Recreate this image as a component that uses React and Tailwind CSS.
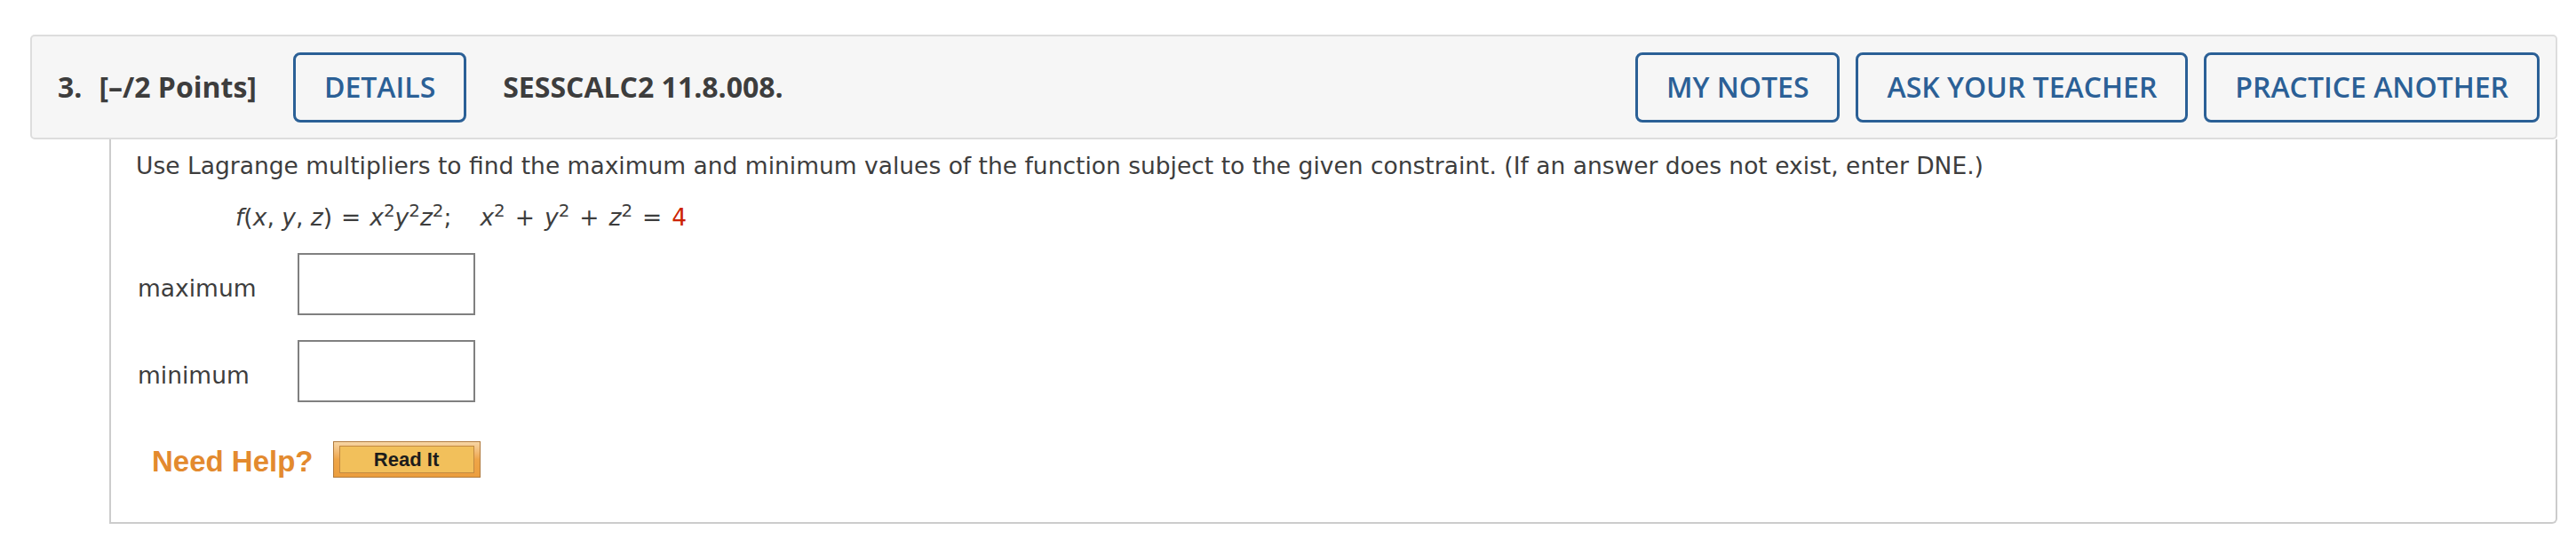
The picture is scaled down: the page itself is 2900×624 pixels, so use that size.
export default function App() {
  const openSans = { fontFamily: '"Open Sans", "Liberation Sans", sans-serif' }
  return (
    <div className="w-[2900px] h-[624px] bg-white pt-[39px] pl-[34px] pr-[21px]">
      {/* Question header */}
      <div
        className="flex items-center h-[118px] border-2 border-[#dddddd] rounded-[5px] bg-[#f6f6f6] pl-[29px] pr-[18px] text-[32px] text-[#3d3d3d]"
        style={openSans}
      >
        <span className="font-bold">3.</span>
        <span className="font-bold ml-[19px]">[–/2 Points]</span>
        <button className="ml-[41px] h-[79px] px-[32px] border-[3px] border-[#2b6096] rounded-[8px] font-semibold text-[#2b6096] bg-[#f6f6f6]">
          DETAILS
        </button>
        <span className="font-bold ml-[41px]">SESSCALC2 11.8.008.</span>
        <div className="ml-auto flex gap-[18px]">
          <button className="h-[79px] px-[32px] border-[3px] border-[#2b6096] rounded-[8px] font-semibold text-[#2b6096] bg-[#f6f6f6]">
            MY NOTES
          </button>
          <button className="h-[79px] px-[32px] border-[3px] border-[#2b6096] rounded-[8px] font-semibold text-[#2b6096] bg-[#f6f6f6]">
            ASK YOUR TEACHER
          </button>
          <button className="h-[79px] px-[32px] border-[3px] border-[#2b6096] rounded-[8px] font-semibold text-[#2b6096] bg-[#f6f6f6]">
            PRACTICE ANOTHER
          </button>
        </div>
      </div>

      {/* Question body */}
      <div
        className="ml-[89px] border-2 border-t-0 border-[#cccccc] rounded-br-[6px] pt-[12px] pl-[28px] pb-[50px] text-[26.5px] leading-[36px] text-[#3d3d3d]"
        style={{ fontFamily: '"DejaVu Sans", Verdana, sans-serif' }}
      >
        <p>
          Use Lagrange multipliers to find the maximum and minimum values of the function subject to the given constraint. (If an answer does not exist, enter DNE.)
        </p>
        <p className="mt-[22px] pl-[112px] whitespace-nowrap">
          <i>f</i>(<i>x</i>, <i>y</i>, <i>z</i>)<span className="mx-[10px]">=</span><i>x</i><sup>2</sup><i>y</i><sup>2</sup><i>z</i><sup>2</sup>;
          <span className="inline-block w-[32px]"></span>
          <i>x</i><sup>2</sup><span className="mx-[11px]">+</span><i>y</i><sup>2</sup><span className="mx-[11px]">+</span><i>z</i><sup>2</sup><span className="mx-[11px]">=</span><span className="text-[#cc2200]">4</span>
        </p>

        <div className="mt-[22px] flex items-center">
          <span className="w-[182px] pl-[2px] pt-[10px]">maximum</span>
          <input type="text" className="w-[200px] h-[70px] border-2 border-[#808080] bg-white" />
        </div>
        <div className="mt-[28px] flex items-center">
          <span className="w-[182px] pl-[2px] pt-[10px]">minimum</span>
          <input type="text" className="w-[200px] h-[70px] border-2 border-[#808080] bg-white" />
        </div>

        <div className="mt-[44px] flex items-center pl-[18px]" style={{ fontFamily: '"Liberation Sans", Arial, sans-serif' }}>
          <span className="text-[33px] font-bold text-[#e38a2e] leading-none pt-[4px]">Need Help?</span>
          <button className="ml-[22px] w-[166px] h-[41px] border border-[#b17a3c] bg-gradient-to-b from-[#f7d6a4] via-[#eea548] to-[#eb9e3e] px-[6px] py-[4px] flex">
            <span className="flex-1 flex items-center justify-center border border-[#c28a42] bg-[#f2c05b] text-[22px] font-bold text-[#1c1c1c] leading-none">
              Read It
            </span>
          </button>
        </div>
      </div>
    </div>
  )
}
